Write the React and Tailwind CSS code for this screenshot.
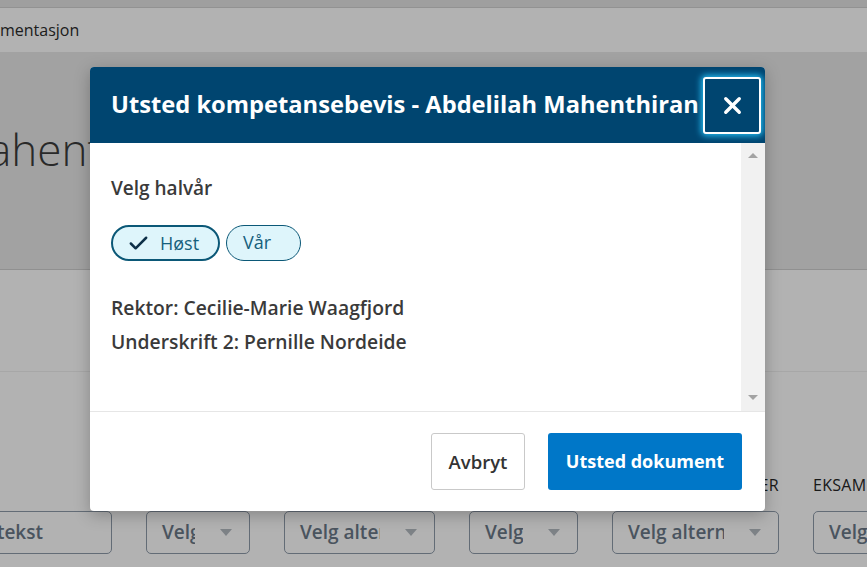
import { Check, X } from 'lucide-react';

const columns = [
  { label: '', text: 'tekst', width: 'w-[150px]', input: true },
  { label: 'KARAKTER', text: 'Velg', width: 'w-[104px]' },
  { label: 'ALTERNATIV', text: 'Velg alternativ', width: 'w-[151px]' },
  { label: 'ORDEN', text: 'Velg', width: 'w-[109px]' },
  { label: 'VURDERINGSFORMER', text: 'Velg alternativ', width: 'w-[167px]' },
  { label: 'EKSAMEN', text: 'Velg', width: 'w-[120px]' },
];

function SelectBox({ col }) {
  return (
    <div className="flex h-[43px] items-center rounded-[5px] border border-[#8e9baa] bg-white">
      {col.input ? (
        <span className="flex-1 overflow-hidden whitespace-nowrap pr-[68px] text-right text-[19px] font-semibold text-[#6b7988]">
          {col.text}
        </span>
      ) : (
        <>
          <span className="min-w-0 flex-1 overflow-hidden whitespace-nowrap pl-[15px] text-[19px] font-semibold text-[#6b7988]">
            {col.text}
          </span>
          <span className="flex w-[54px] shrink-0 justify-end pr-[17px]">
            <span className="h-0 w-0 border-x-[6px] border-t-[7px] border-x-transparent border-t-[#b4bac1]" />
          </span>
        </>
      )}
    </div>
  );
}

export default function App() {
  return (
    <div className="relative h-[567px] w-[867px] overflow-hidden bg-white font-['Open_Sans',sans-serif]">
      {/* Page behind the dialog */}
      <div className="h-[8px] border-b border-[#d2d2d2] bg-[#e4e4e4]" />
      <div className="flex h-[44px] items-center bg-white text-[16px] text-[#2b2b2b]">mentasjon</div>
      <div className="h-[218px] overflow-hidden border-b border-[#cfcfcf] bg-[#e9e9e9] pt-[69px]">
        <h1 className="-ml-[12px] whitespace-nowrap text-[44px] font-light leading-[56px] text-[#3c3c3c]">ahenthiran</h1>
      </div>
      <div className="h-[102px] border-b border-[#f0f0f0]" />
      <div className="-ml-[38px] flex gap-[34px] pt-[101px]">
        {columns.map((col) => (
          <div key={col.text + col.width} className={`flex shrink-0 flex-col ${col.width}`}>
            <div className="mb-[14px] h-[24px] whitespace-nowrap text-[16px] leading-[24px] tracking-[0.3px] text-[#262626]">
              {col.label}
            </div>
            <SelectBox col={col} />
          </div>
        ))}
      </div>

      {/* Backdrop */}
      <div className="absolute inset-0 bg-black/30" />

      {/* Dialog */}
      <div className="absolute left-[90px] top-[67px] w-[675px] rounded-[4px] bg-white shadow-[0_4px_16px_rgba(0,0,0,0.25)]">
        <div className="flex h-[76px] items-center overflow-hidden rounded-t-[4px] bg-[#004570] pl-[21px] pr-[4px]">
          <h2 className="min-w-0 flex-1 whitespace-nowrap text-[23.7px] font-bold text-white">
            Utsted kompetansebevis - Abdelilah Mahenthiran
          </h2>
          <button className="flex h-[57px] w-[58px] shrink-0 items-center justify-center rounded-[3px] border-2 border-white bg-[#004570] shadow-[0_0_6px_2px_#22b8ee]">
            <X size={27} strokeWidth={3} className="text-white" />
          </button>
        </div>

        <div className="flex h-[268px]">
          <div className="flex-1 pl-[21px] pt-[32px] text-[#3a3a3a]">
            <p className="text-[19px] font-semibold leading-[26px]">Velg halvår</p>
            <div className="mt-[24px] flex gap-[6px]">
              <button className="flex h-[36px] w-[109px] items-center gap-[10px] rounded-full border-2 border-[#0b5877] bg-[#def5fb] pl-[14px] text-[18px] text-[#16607c]">
                <Check size={23} strokeWidth={2.6} className="text-[#0d3048]" />
                Høst
              </button>
              <button className="flex h-[36px] w-[75px] items-center rounded-full border border-[#0b5877] bg-[#def5fb] pb-[2px] pl-[16px] text-[18px] text-[#16607c]">
                Vår
              </button>
            </div>
            <div className="mt-[30px] text-[19.3px] font-semibold leading-[34px]">
              <p>Rektor: Cecilie-Marie Waagfjord</p>
              <p>Underskrift 2: Pernille Nordeide</p>
            </div>
          </div>
          <div className="flex w-[24px] flex-col items-center justify-between bg-[#f1f1f1] pb-[11px] pt-[10px]">
            <span className="h-0 w-0 border-x-[5px] border-b-[5px] border-x-transparent border-b-[#a3a3a3]" />
            <span className="h-0 w-0 border-x-[5px] border-t-[5px] border-x-transparent border-t-[#a3a3a3]" />
          </div>
        </div>

        <div className="flex h-[100px] items-center justify-end gap-[23px] border-t border-[#e6e6e6] pr-[23px]">
          <button className="h-[57px] w-[94px] rounded-[3px] border border-[#c9c9c9] bg-white text-[18.5px] font-semibold text-[#333]">
            Avbryt
          </button>
          <button className="h-[57px] w-[194px] rounded-[3px] bg-[#0077c8] text-[18px] font-bold text-white">
            Utsted dokument
          </button>
        </div>
      </div>
    </div>
  );
}
